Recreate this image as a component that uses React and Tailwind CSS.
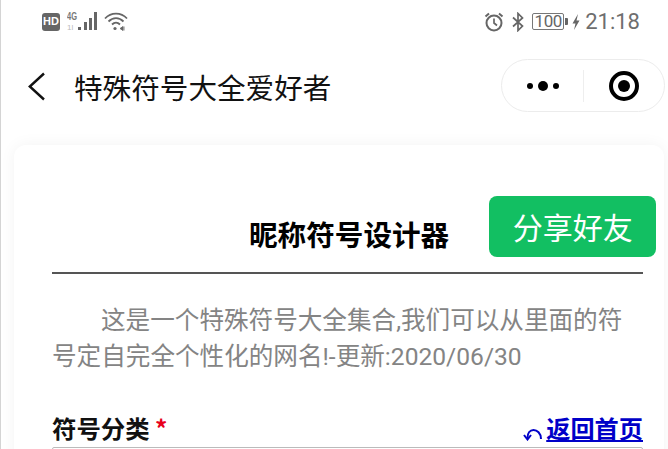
const cjk = { fontFamily: '"Noto Sans CJK SC", sans-serif' }

const StatusLeft = () => (
  <div className="flex items-center">
    {/* HD badge */}
    <div className="w-[18px] h-[18px] rounded-[3px] bg-[#666] text-white text-[11px] font-bold flex items-center justify-center font-['Liberation_Sans',sans-serif]">HD</div>
    {/* 4G + signal */}
    <svg width="33" height="21" viewBox="0 0 33 21" className="ml-[7px]">
      <text x="0" y="9" fontSize="11" fontWeight="700" fill="#777" fontFamily="Liberation Sans" textLength="10" lengthAdjust="spacingAndGlyphs">4G</text>
      <text x="0" y="19" fontSize="8" fill="#bbb" fontFamily="Liberation Sans">1l</text>
      <rect x="11" y="16" width="3" height="3" fill="#666" />
      <rect x="17" y="11" width="3" height="8" fill="#666" />
      <rect x="22" y="7" width="3" height="12" fill="#666" />
      <rect x="27" y="1" width="3" height="18" fill="#666" />
    </svg>
    <svg width="24" height="21" viewBox="0 0 24 21" fill="none" stroke="#666" strokeWidth="1.8" className="ml-[4px]">
      <path d="M1 7.5C7 1 17 1 23 7.5" />
      <path d="M4.5 10.5C9 6 15 6 19.5 10.5" />
      <path d="M8 13.5C10.5 11 13.5 11 16 13.5" />
      <circle cx="11" cy="17.5" r="1.6" fill="#666" stroke="none" />
      <path d="M16 17.5l3-2v4zM20 15.5v4" fill="#666" strokeWidth="0.8" />
    </svg>
  </div>
)

const StatusRight = () => (
  <div className="flex items-center">
    <svg width="20" height="20" viewBox="0 0 20 20" fill="none" stroke="#666" strokeWidth="2">
      <circle cx="10" cy="11" r="7.5" />
      <path d="M10 6.5V11l3 2.500" strokeWidth="1.7" />
      <path d="M1.5 4.500L5 1.500M18.500 4.500L15 1.500" />
    </svg>
    <svg width="14" height="20" viewBox="0 0 14 20" fill="none" stroke="#666" strokeWidth="1.7" className="ml-[7px]">
      <path d="M2 5.500L11.500 14 7 18.500V1.500L11.500 6 2 14.500" />
    </svg>
    <div className="ml-[7px] w-[32px] h-[17px] border border-[#777] rounded-[2px] text-[17px] leading-[15px] text-[#666] text-center tracking-[-0.5px] font-['Roboto',sans-serif]">100</div>
    <div className="ml-[1px] w-[3px] h-[7px] bg-[#666] rounded-r-[1px]"></div>
    <svg width="10" height="18" viewBox="0 0 10 18" fill="#666" className="ml-[3px]">
      <path d="M7 1L1.500 10.500H4.500L3 17 8.500 7.500H5.500z" />
    </svg>
    <span className="ml-[4px] text-[22px] leading-none text-[#6e6e6e] font-['Roboto',sans-serif]">21:18</span>
  </div>
)

const Capsule = () => (
  <div className="w-[164px] h-[53px] rounded-full border border-[#ececec] flex items-center">
    <div className="w-[81px] flex items-center justify-center gap-[5px]">
      <span className="w-[6px] h-[6px] rounded-full bg-black"></span>
      <span className="w-[10px] h-[10px] rounded-full bg-black"></span>
      <span className="w-[6px] h-[6px] rounded-full bg-black"></span>
    </div>
    <div className="w-px h-[32px] bg-[#eeeeee]"></div>
    <div className="flex-1 flex items-center justify-center">
      <div className="w-[30px] h-[30px] rounded-full border-[4px] border-black flex items-center justify-center">
        <span className="w-[12px] h-[12px] rounded-full bg-black"></span>
      </div>
    </div>
  </div>
)

export default function App() {
  return (
    <div className="w-[668px] h-[449px] overflow-hidden bg-white border-l border-l-[#d4d4d4] flex flex-col" style={cjk}>
      <div className="h-[42px] shrink-0 flex items-center justify-between pl-[41px] pr-[28px] pt-[1px]">
        <StatusLeft />
        <StatusRight />
      </div>

      <div className="h-[87px] shrink-0 flex items-start pl-[27px] pr-[3px] pt-[17px]">
        <svg width="18" height="30" viewBox="0 0 18 30" fill="none" stroke="#111" strokeWidth="2.4" className="mt-[13px]">
          <path d="M16 1.500L1.800 14.500 16 27.500" />
        </svg>
        <div className="ml-[28px] mt-[7px] text-[28.6px] leading-[42px] text-[#111] whitespace-nowrap">特殊符号大全爱好者</div>
        <div className="ml-auto">
          <Capsule />
        </div>
      </div>

      <div className="shrink-0 ml-[13px] mr-[4px] mt-[16px] h-[320px] rounded-t-[12px] bg-white shadow-[0_0_16px_rgba(0,0,0,0.05)] px-[38px] pt-[51px]">
        <div className="flex items-center h-[61px]">
          <div className="ml-[197px] mt-[15px] text-[28.6px] leading-[40px] font-bold text-black whitespace-nowrap">昵称符号设计器</div>
          <div className="ml-[40px] w-[167px] h-[61px] shrink-0 rounded-[8px] bg-[#12bf62] text-white text-[30px] flex items-center justify-center">分享好友</div>
        </div>

        <div className="h-[2px] w-[591px] bg-[#555] mt-[15px]"></div>

        <p className="w-[591px] mt-[29px] text-[24.6px] leading-[36px] text-[#848484] indent-[49px] font-['Roboto','Noto_Sans_CJK_SC',sans-serif]">
          这是一个特殊符号大全集合,我们可以从里面的符号定自完全个性化的网名!-更新:2020/06/30
        </p>

        <div className="w-[591px] flex items-center justify-between mt-[34px]">
          <div className="text-[24.4px] leading-[38px] font-bold text-[#111]">
            符号分类 <span className="text-[#e8001c]">*</span>
          </div>
          <a className="block text-[24.2px] leading-[38px] font-bold text-[#0000c8] underline whitespace-nowrap">
            <svg width="22" height="16" viewBox="0 0 22 16" fill="none" stroke="#0000c8" strokeWidth="2" className="inline-block align-[-3px] mr-[2px]">
              <path d="M19 14C19 8 15 5 11.500 5S5.500 8 5.500 13" />
              <path d="M2 10l3.500 4.500L9 10" />
            </svg>
            返回首页
          </a>
        </div>

        <div className="w-[591px] h-[40px] border border-[#bbb] rounded-[2px]"></div>
      </div>
    </div>
  )
}
